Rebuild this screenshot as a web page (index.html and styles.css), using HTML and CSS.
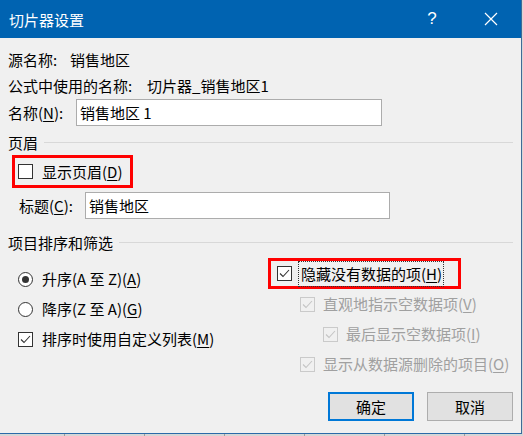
FILE: index.html
```html
<!DOCTYPE html>
<html lang="zh-CN">
<head>
<meta charset="utf-8">
<title>切片器设置</title>
<link rel="stylesheet" href="styles.css">
</head>
<body>
<div class="dialog">
  <div class="titlebar">
    <span class="title">切片器设置</span>
    <span class="tbtn help">?</span>
    <span class="tbtn close">
      <svg width="14" height="14" viewBox="0 0 14 14"><path d="M1 1 L13 13 M13 1 L1 13" stroke="#fff" stroke-width="1.2" fill="none"/></svg>
    </span>
  </div>
  <div class="content">
    <div class="row"><span class="lbl-src">源名称:</span><span>销售地区</span></div>
    <div class="row"><span class="lbl-formula">公式中使用的名称:</span><span>切片器_销售地区1</span></div>
    <div class="field-row">
      <span class="lbl-name">名称(<u>N</u>):</span>
      <div class="input input-name">销售地区 1</div>
    </div>
    <div class="section"><span>页眉</span><div class="rule"></div></div>
    <div class="redbox redbox-header">
      <span class="check"></span>
      <span class="opt-text">显示页眉(<u>D</u>)</span>
    </div>
    <div class="field-row caption-row">
      <span class="lbl-caption">标题(<u>C</u>):</span>
      <div class="input input-caption">销售地区</div>
    </div>
    <div class="section section2"><span>项目排序和筛选</span><div class="rule"></div></div>
    <div class="options">
      <div class="col-left">
        <div class="opt"><span class="radio on"></span><span class="opt-text">升序(A 至 Z)(<u>A</u>)</span></div>
        <div class="opt"><span class="radio"></span><span class="opt-text">降序(Z 至 A)(<u>G</u>)</span></div>
        <div class="opt"><span class="check checked"><svg width="13" height="13" viewBox="0 0 13 13"><path d="M2 6.5 L5 9.5 L11 3" stroke="#333" stroke-width="1.1" fill="none"/></svg></span><span class="opt-text">排序时使用自定义列表(<u>M</u>)</span></div>
      </div>
      <div class="col-right">
        <div class="redbox redbox-hide">
          <span class="check checked"><svg width="13" height="13" viewBox="0 0 13 13"><path d="M2 6.5 L5 9.5 L11 3" stroke="#333" stroke-width="1.1" fill="none"/></svg></span>
          <span class="focus-text">隐藏没有数据的项(<u>H</u>)</span>
        </div>
        <div class="opt dis ind1"><span class="check checked"><svg width="13" height="13" viewBox="0 0 13 13"><path d="M2 6.5 L5 9.5 L11 3" stroke="#c4c4c4" stroke-width="1.1" fill="none"/></svg></span><span class="opt-text">直观地指示空数据项(<u>V</u>)</span></div>
        <div class="opt dis ind2"><span class="check checked"><svg width="13" height="13" viewBox="0 0 13 13"><path d="M2 6.5 L5 9.5 L11 3" stroke="#c4c4c4" stroke-width="1.1" fill="none"/></svg></span><span class="opt-text">最后显示空数据项(<u>I</u>)</span></div>
        <div class="opt dis ind1"><span class="check checked"><svg width="13" height="13" viewBox="0 0 13 13"><path d="M2 6.5 L5 9.5 L11 3" stroke="#c4c4c4" stroke-width="1.1" fill="none"/></svg></span><span class="opt-text">显示从数据源删除的项目(<u>O</u>)</span></div>
      </div>
    </div>
    <div class="buttons">
      <button class="btn btn-ok">确定</button>
      <button class="btn">取消</button>
    </div>
  </div>
</div>
</body>
</html>
```

FILE: styles.css
```css
* { box-sizing: border-box; }
html, body { margin: 0; padding: 0; }
body {
  width: 523px;
  height: 436px;
  overflow: hidden;
  font-family: "Noto Sans CJK SC", "Microsoft YaHei", sans-serif;
  font-size: 15px;
  color: #000;
  background-color: #d6d6d6;
  background-image: repeating-linear-gradient(to right, #d6d6d6 0 79px, #9c9c9c 79px 80px);
  background-position: -15px 0;
}
u { text-decoration: underline; text-underline-offset: 2px; text-decoration-thickness: 1px; }

.dialog {
  width: 522px;
  height: 434px;
  background: #f0f0f0;
  border-right: 1px solid #3f6b96;
  border-bottom: 1px solid #2b6aa8;
  display: flex;
  flex-direction: column;
}

.titlebar {
  height: 38px;
  flex: none;
  background: #0063b1;
  color: #fff;
  display: flex;
  align-items: center;
  padding: 0 7px 0 9px;
  gap: 13px;
}
.title { flex: 1; font-size: 15px; line-height: 20px; padding-top: 1px; }
.tbtn { width: 46px; height: 38px; display: flex; align-items: center; justify-content: center; }
.help { font-family: "Liberation Sans", sans-serif; font-size: 17px; font-weight: 300; }

.content {
  flex: 1;
  padding: 9px 8px 0 8px;
  display: flex;
  flex-direction: column;
}

.row { height: 26px; line-height: 26px; display: flex; white-space: nowrap; }
.lbl-src { width: 62px; }
.lbl-formula { width: 139px; }

.field-row { height: 27px; display: flex; align-items: center; white-space: nowrap; }
.lbl-name { width: 68px; }
.caption-row { margin-top: 4px; padding-left: 11px; }
.lbl-caption { width: 66px; }

.input {
  height: 27px;
  background: #fff;
  border: 1px solid #acacac;
  padding: 0 3px;
  line-height: 25px;
}
.input-name { width: 306px; }
.input-caption { width: 305px; }

.section { height: 26px; margin-top: 3px; display: flex; align-items: center; white-space: nowrap; }
.section2 { margin-top: 10px; }
.rule { flex: 1; height: 1px; background: #d8d8d8; margin-left: 6px; }

.redbox {
  border: 3px solid #f00;
  display: flex;
  align-items: center;
  white-space: nowrap;
}
.redbox-header { width: 121px; height: 33px; margin-left: 4px; padding-left: 3px; }
.redbox-hide { width: 193px; height: 31px; margin-top: 3px; padding-left: 6px; }

.check {
  width: 15px; height: 15px; flex: none;
  border: 1px solid #333;
  background: #fff;
  display: flex; align-items: center; justify-content: center;
}
.dis .check { border-color: #cacaca; background: #f0f0f0; }
.radio {
  width: 15px; height: 15px; flex: none;
  border: 1px solid #333;
  border-radius: 50%;
  background: #fff;
  display: flex; align-items: center; justify-content: center;
}
.radio.on::after { content: ""; width: 7px; height: 7px; border-radius: 50%; background: #333; }

.opt-text { margin-left: 9px; line-height: 20px; }
.focus-text { margin-left: 7px; padding: 0 1px 0 2px; outline: 1px dotted #333; line-height: 24px; height: 24px; }

.options { display: grid; grid-template-columns: 260px 1fr; }
.col-left { padding-top: 9px; padding-left: 10px; }
.opt { height: 30px; display: flex; align-items: center; white-space: nowrap; }
.dis { color: #a0a0a0; }
.dis .opt-text { margin-left: 8px; }
.ind1 { padding-left: 32px; }
.ind2 { padding-left: 55px; }

.buttons { display: flex; justify-content: flex-end; gap: 13px; margin-top: 13px; }
.btn {
  width: 86px; height: 29px;
  background: #e1e1e1;
  border: 1px solid #adadad;
  font-family: inherit;
  font-size: 15px;
  color: #000;
  padding: 0;
}
.btn-ok { border: 2px solid #0078d7; }
```
